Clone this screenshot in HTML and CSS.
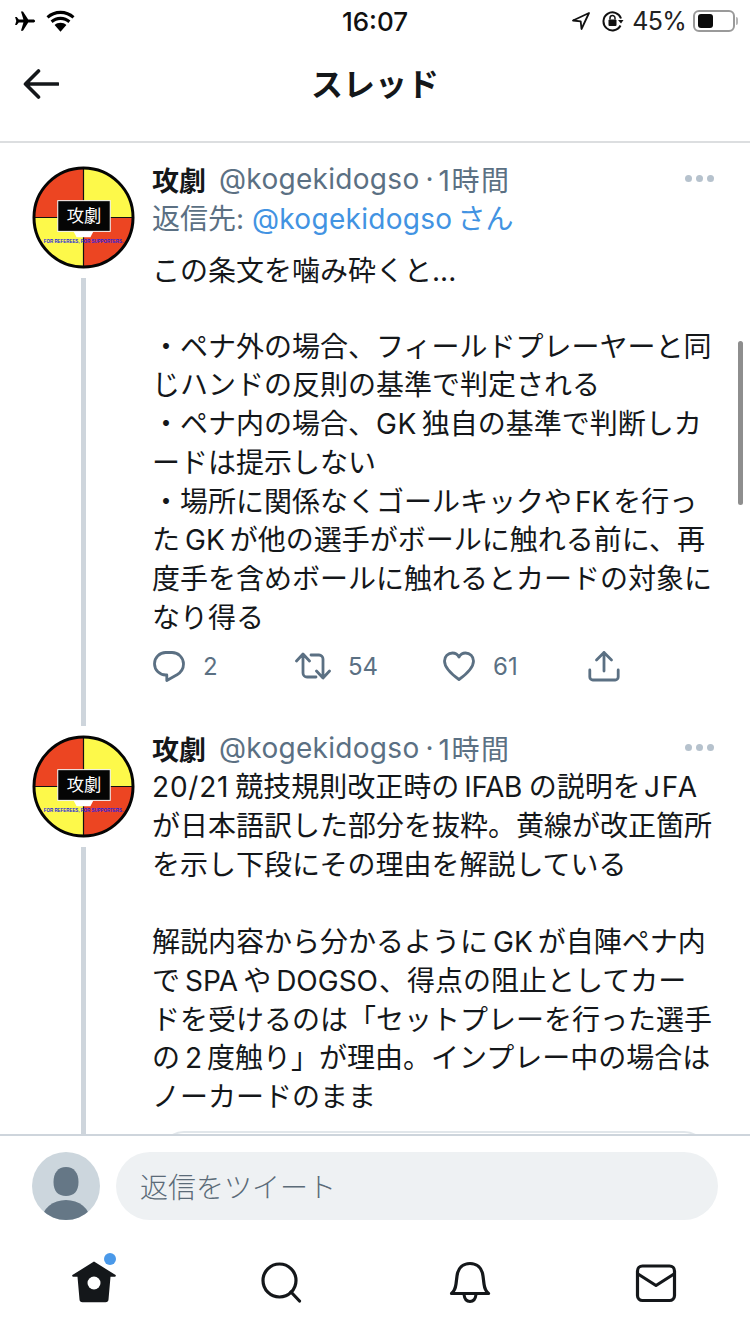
FILE: index.html
```html
<!DOCTYPE html>
<html lang="ja">
<head>
<meta charset="utf-8">
<title>スレッド</title>
<link rel="stylesheet" href="styles.css">
</head>
<body>
<div class="screen">
  <header class="top">
    <div class="status">
      <div class="status-left">
        <svg class="ic-plane" viewBox="0 0 24 24"><path d="M23 12c0-1-1-1.700-2.200-1.700h-5.300L9.800 1.500H7.600l2.700 8.800H5.200L3 7.600H1.200l1.300 4.400-1.300 4.400H3l2.200-2.700h5.100l-2.700 8.800h2.200l5.700-8.800h5.300C22 13.700 23 13 23 12z"/></svg>
        <svg class="ic-wifi" viewBox="0 0 28 22"><path d="M14 4c4.600 0 8.800 1.700 12 4.600l2-2.400C24.200 2.800 19.300.8 14 .8S3.800 2.800 0 6.200l2 2.400C5.200 5.700 9.400 4 14 4z"/><path d="M14 10c3 0 5.800 1.100 7.900 3l2-2.400C21.200 8.200 17.800 6.800 14 6.800s-7.200 1.400-9.900 3.800l2 2.400c2.100-1.900 4.900-3 7.900-3z"/><path d="M14 12.800c-2.300 0-4.300.8-5.900 2.200L14 21.800l5.900-6.800c-1.600-1.400-3.600-2.200-5.900-2.200z"/></svg>
      </div>
      <span class="clock">16:07</span>
      <div class="status-right">
        <svg class="ic-loc" viewBox="0 0 20 20"><path d="M18 2 2 9.500l7.700.8.800 7.700z" fill="none" stroke="#111" stroke-width="1.800" stroke-linejoin="round"/></svg>
        <svg class="ic-lock" viewBox="0 0 22 22"><path d="M19 8.500A9 9 0 1 0 18.500 15.500" fill="none" stroke="#111" stroke-width="2"/><path d="M16 10h5.500L19 13.500z" fill="#111"/><rect x="6.500" y="9.500" width="8" height="6.500" rx="1" fill="#111"/><path d="M8 9.500V8a2.500 2.500 0 0 1 5 0v1.500" fill="none" stroke="#111" stroke-width="1.500"/></svg>
        <span class="pct">45%</span>
        <div class="battery"><div class="battery-fill"></div></div>
        <div class="battery-nub"></div>
      </div>
    </div>
    <div class="nav">
      <svg class="ic-back" viewBox="0 0 36 30"><path d="M15.500 2 2.500 15l13 13M3 15h32" fill="none" stroke="#14171a" stroke-width="3.600" stroke-linecap="round" stroke-linejoin="round"/></svg>
      <h1 class="title">スレッド</h1>
    </div>
  </header>

  <main class="thread">
    <article class="tweet tweet-first">
      <div class="side">
        <svg class="avatar" viewBox="0 0 104 104">
          <circle cx="52" cy="52" r="50" fill="#fdf94a"/>
          <path d="M52 2A50 50 0 0 0 2 52h50zM52 102a50 50 0 0 0 50-50H52z" fill="#ec4522"/>
          <path d="M52 2v100M2 52h100" stroke="#111" stroke-width="1.200"/>
          <circle cx="52" cy="52" r="50" fill="none" stroke="#050505" stroke-width="3"/>
          <path d="M41 64h22l-4 8H45z" fill="#fff"/>
          <rect x="26" y="35" width="53" height="31" fill="#050505" stroke="#fff" stroke-width="1"/>
          <text class="logo-kanji" x="52.500" y="57" text-anchor="middle">攻劇</text>
          <text class="logo-small" x="52" y="78" text-anchor="middle">FOR REFEREES, FOR SUPPORTERS.</text>
        </svg>
        <div class="line"></div>
      </div>
      <div class="content">
        <div class="meta">
          <span class="name">攻劇</span><span class="handle">@kogekidogso</span><span class="dot">·</span><span class="time">1時間</span>
          <span class="more"><i></i><i></i><i></i></span>
        </div>
        <div class="reply-to">返信先: <span class="link">@kogekidogso<span class="gap">さん</span></span></div>
        <p class="body lead">この条文を噛み砕くと...</p>
        <p class="body para">・ペナ外の場合、フィールドプレーヤーと同<br>じハンドの反則の基準で判定される<br>・ペナ内の場合、<span class="lat-r">GK</span>独自の基準で判断しカ<br>ードは提示しない<br>・場所に関係なくゴールキックや<span class="lat-s">FK</span>を行っ<br>た<span class="lat">GK</span>が他の選手がボールに触れる前に、再<br>度手を含めボールに触れるとカードの対象に<br>なり得る</p>
        <div class="actions">
          <div class="act act-reply">
            <svg class="ic-act" viewBox="0 0 32 32"><path d="M13 2.500h6a11.500 11.500 0 0 1 11.500 11.500c0 5-3 8.600-6.500 10.800L13.800 30.500v-5.500H13A11.300 11.300 0 0 1 1.500 13.700 11.200 11.200 0 0 1 13 2.500z" fill="none" stroke="#5b7083" stroke-width="2.800" stroke-linejoin="round"/></svg>
            <span>2</span>
          </div>
          <div class="act act-rt">
            <svg class="ic-rt" viewBox="0 0 36 30"><path d="M1.500 10 8 3l6.500 7M8 4v18a4 4 0 0 0 4 4h9M34.500 20 28 27l-6.500-7M28 26V8a4 4 0 0 0-4-4h-8" fill="none" stroke="#5b7083" stroke-width="2.800" stroke-linecap="round" stroke-linejoin="round"/></svg>
            <span>54</span>
          </div>
          <div class="act act-like">
            <svg class="ic-act" viewBox="0 0 32 32"><path d="M16 29.500C9 24.500 1.500 18.500 1.500 11A8 8 0 0 1 9.500 3c3 0 5.200 1.500 6.500 4 1.300-2.500 3.500-4 6.500-4a8 8 0 0 1 8 8c0 7.500-7.500 13.500-14.500 18.500z" fill="none" stroke="#5b7083" stroke-width="2.800" stroke-linejoin="round"/></svg>
            <span>61</span>
          </div>
          <svg class="ic-act" viewBox="0 0 32 32"><path d="M16 21V2.500M8.500 10 16 2.500 23.500 10M1.800 20v7a3 3 0 0 0 3 3h22.400a3 3 0 0 0 3-3v-7" fill="none" stroke="#5b7083" stroke-width="2.800" stroke-linecap="round" stroke-linejoin="round"/></svg>
        </div>
      </div>
    </article>

    <article class="tweet">
      <div class="side">
        <svg class="avatar" viewBox="0 0 104 104">
          <circle cx="52" cy="52" r="50" fill="#fdf94a"/>
          <path d="M52 2A50 50 0 0 0 2 52h50zM52 102a50 50 0 0 0 50-50H52z" fill="#ec4522"/>
          <path d="M52 2v100M2 52h100" stroke="#111" stroke-width="1.200"/>
          <circle cx="52" cy="52" r="50" fill="none" stroke="#050505" stroke-width="3"/>
          <path d="M41 64h22l-4 8H45z" fill="#fff"/>
          <rect x="26" y="35" width="53" height="31" fill="#050505" stroke="#fff" stroke-width="1"/>
          <text class="logo-kanji" x="52.500" y="57" text-anchor="middle">攻劇</text>
          <text class="logo-small" x="52" y="78" text-anchor="middle">FOR REFEREES, FOR SUPPORTERS.</text>
        </svg>
        <div class="line"></div>
      </div>
      <div class="content">
        <div class="meta">
          <span class="name">攻劇</span><span class="handle">@kogekidogso</span><span class="dot">·</span><span class="time">1時間</span>
          <span class="more"><i></i><i></i><i></i></span>
        </div>
        <p class="body tight"><span class="lat-r wide">20/21</span>競技規則改正時の<span class="lat wide-r">IFAB</span>の説明を<span class="lat-jfa">JFA</span><br>が日本語訳した部分を抜粋。黄線が改正箇所<br>を示し下段にその理由を解説している<br><br>解説内容から分かるように<span class="lat">GK</span>が自陣ペナ内<br>で<span class="lat">SPA</span>や<span class="lat-dogso">DOGSO</span>、得点の阻止としてカー<br>ドを受けるのは「セットプレーを行った選手<br>の<span class="lat">2</span>度触り」が理由。インプレー中の場合は<br>ノーカードのまま</p>
        <div class="card"></div>
      </div>
    </article>
    <div class="scrollbar"></div>
  </main>

  <footer class="bottom">
    <div class="reply-bar">
      <svg class="me" viewBox="0 0 68 68"><defs><clipPath id="meclip"><circle cx="34" cy="34" r="34"/></clipPath></defs><circle cx="34" cy="34" r="34" fill="#ccd6dd"/><g clip-path="url(#meclip)" fill="#657786"><path d="M34 15c8 0 12.500 6 12.500 15S42 44 34 44s-12.500-5-12.500-14S26 15 34 15z"/><ellipse cx="34" cy="68" rx="24" ry="20"/></g></svg>
      <div class="input">返信をツイート</div>
    </div>
    <nav class="tabs">
      <div class="tab">
        <svg class="ic-home" viewBox="0 0 44 42"><path d="M22 .5 43.200 13.800a1 1 0 0 1-.6 1.900H38.500L36.500 38.500a3 3 0 0 1-3 2.800H10.500a3 3 0 0 1-3-2.800L5.500 15.700H1.400a1 1 0 0 1-.6-1.900z" fill="#14171a"/><circle cx="22" cy="22" r="6.500" fill="#fff"/></svg>
        <span class="badge"></span>
      </div>
      <div class="tab">
        <svg class="ic-tab" viewBox="0 0 42 42"><circle cx="19.500" cy="19.500" r="16.500" fill="none" stroke="#14171a" stroke-width="3.200"/><path d="M31 31l8.500 9" fill="none" stroke="#14171a" stroke-width="3.200" stroke-linecap="round"/></svg>
      </div>
      <div class="tab">
        <svg class="ic-tab ic-bell" viewBox="0 0 42 42"><path d="M2.500 32.500c3-2.500 4-5.500 4.500-9.500l1-8C9 7 14 2.500 21 2.500S33 7 34 15l1 8c.5 4 1.500 7 4.500 9.500z" fill="none" stroke="#14171a" stroke-width="3.200" stroke-linejoin="round"/><path d="M15 33.500c.5 4.500 3 7 6 7s5.500-2.500 6-7" fill="none" stroke="#14171a" stroke-width="3"/></svg>
      </div>
      <div class="tab">
        <svg class="ic-tab" viewBox="0 0 42 42"><rect x="2.500" y="5" width="37" height="34.500" rx="5" fill="none" stroke="#14171a" stroke-width="3.200"/><path d="M3 13l18 11.500L39 13" fill="none" stroke="#14171a" stroke-width="3.200" stroke-linejoin="round"/></svg>
      </div>
    </nav>
  </footer>
</div>
</body>
</html>
```
FILE: styles.css
```css
* { box-sizing: border-box; }
html, body { margin: 0; padding: 0; background: #fff; }
body {
  font-family: Inter, Roboto, "Noto Sans CJK JP", sans-serif;
  color: #14171a;
}
.screen {
  width: 750px;
  height: 1334px;
  display: flex;
  flex-direction: column;
  overflow: hidden;
  position: relative;
}
.top {
  flex: 0 0 143px;
  border-bottom: 2px solid #dcdee0;
  padding-top: 8px;
  position: relative;
  z-index: 2;
  background: #fff;
}
.status {
  height: 26px;
  position: relative;
  display: flex;
  align-items: center;
  justify-content: space-between;
  padding: 0 12px 0 14px;
}
.status-left, .status-right { display: flex; align-items: center; }
.ic-plane { width: 22px; height: 22px; }
.ic-wifi { width: 29px; height: 22px; margin-left: 10px; }
.clock {
  position: absolute;
  left: 0;
  right: 0;
  text-align: center;
  font-size: 26px;
  font-weight: 500;
  color: #111;
}
.ic-loc { width: 20px; height: 20px; }
.ic-lock { width: 22px; height: 22px; margin-left: 11px; }
.pct { font-size: 25px; margin-left: 8px; color: #222; letter-spacing: -.7px; }
.battery {
  width: 42px;
  height: 22px;
  border: 2px solid #9a9a9a;
  border-radius: 6px;
  padding: 2px 3px;
  margin-left: 7px;
}
.battery-fill { width: 15px; height: 14px; background: #0a0a0a; border-radius: 3px; }
.battery-nub { width: 2px; height: 8px; background: #b5b5b5; margin-left: 1px; border-radius: 0 2px 2px 0; }
.nav {
  position: relative;
  height: 90px;
  padding: 6px 0 0 23px;
  display: flex;
  align-items: center;
}
.ic-back { width: 36px; height: 30px; margin-top: 4px; }
.title {
  position: absolute;
  left: 0;
  right: 0;
  margin: 0;
  text-align: center;
  font: 700 32px/1.2 "Noto Sans CJK JP", sans-serif;
}
.thread {
  flex: 1 1 auto;
  min-height: 0;
  overflow: hidden;
  padding-top: 14px;
  position: relative;
}
.tweet { display: flex; padding: 9px 0 0 32px; }
.tweet-first .content { padding-bottom: 40px; }
.side {
  flex: 0 0 103px;
  display: flex;
  flex-direction: column;
  align-items: center;
}
.avatar { width: 103px; height: 103px; flex: none; }
.line { flex: 1; width: 5px; background: #ced5dc; margin-top: 9px; }
.logo-kanji { font: 400 17.500px "Noto Sans CJK JP", serif; fill: #fff; }
.logo-small { font: 700 4.500px "Liberation Sans", sans-serif; fill: #1f1fe0; }
.content { flex: 1; min-width: 0; padding-left: 17px; padding-right: 24px; }
.meta { display: flex; align-items: center; height: 28px; margin-top: -1px; white-space: nowrap; position: relative; }
.name { font: 700 27px "Noto Sans CJK JP", sans-serif; }
.handle { font-size: 28px; color: #5b7083; margin-left: 13px; letter-spacing: .3px; }
.dot { font-size: 28px; color: #5b7083; margin-left: 6px; }
.time { font-size: 28px; color: #5b7083; margin-left: 5px; letter-spacing: 1.500px; }
.more { position: absolute; right: 12px; top: 10px; display: flex; gap: 4px; }
.more i { width: 7px; height: 7px; border-radius: 50%; background: #b6c2cd; }
.reply-to { font-size: 28px; line-height: 38px; color: #5b7083; margin-top: 7px; white-space: nowrap; }
.link { color: #4293e2; letter-spacing: .3px; }
.gap { margin-left: 5px; letter-spacing: 0; }
.body {
  margin: 0;
  font-size: 28px;
  line-height: 38.700px;
  white-space: nowrap;
  color: #14171a;
}
.lead { margin-top: 14px; }
.para { margin-top: 37px; }
.tight { margin-top: 6px; }
.lat { margin: 0 5px; }
.lat-r { margin-right: 5px; letter-spacing: .5px; }
.lat-s { margin: 0 3px; }
.wide { margin-right: 6px; letter-spacing: .8px; }
.wide-r { letter-spacing: -.4px; margin-right: 7px; }
.lat-jfa { margin-left: 3px; letter-spacing: 2px; }
.lat-dogso { margin: 0 1px 0 5px; }
.actions {
  display: flex;
  align-items: center;
  margin-top: 9px;
  height: 40px;
  padding-left: 1px;
}
.act { display: flex; align-items: center; font-size: 24px; color: #5b7083; }
.act-reply { width: 142px; gap: 18px; }
.act-rt { width: 148px; gap: 17px; }
.act-like { width: 145px; gap: 18px; }
.ic-act { width: 32px; height: 32px; flex: none; }
.ic-rt { width: 36px; height: 30px; flex: none; }
.card {
  height: 120px;
  margin: 14px 18px 0 8px;
  border: 2px solid #e1e6ea;
  border-radius: 24px;
}
.scrollbar {
  position: absolute;
  right: 7px;
  top: 198px;
  width: 5px;
  height: 164px;
  border-radius: 3px;
  background: #8e8e8e;
}
.bottom {
  flex: 0 0 200px;
  background: #fff;
  border-top: 2px solid #ced5dc;
  position: relative;
  z-index: 2;
}
.reply-bar { display: flex; gap: 16px; padding: 16px 32px 0; }
.me { width: 68px; height: 68px; flex: none; }
.input {
  flex: 1;
  height: 68px;
  border-radius: 34px;
  background: #eef1f3;
  padding-left: 24px;
  line-height: 68px;
  font-size: 28px;
  color: #5b6b78;
  font-family: "Noto Sans CJK JP", sans-serif;
  font-weight: 300;
}
.tabs { display: flex; padding: 41px 0 0 0; position: relative; }
.tab { width: 187.500px; display: flex; justify-content: center; position: relative; }
.ic-home { width: 44px; height: 42px; }
.ic-tab { width: 42px; height: 42px; }
.ic-bell { margin-left: 2px; }
.badge {
  position: absolute;
  left: 104px;
  top: -8px;
  width: 12px;
  height: 12px;
  border-radius: 50%;
  background: #4a99e9;
}
```
